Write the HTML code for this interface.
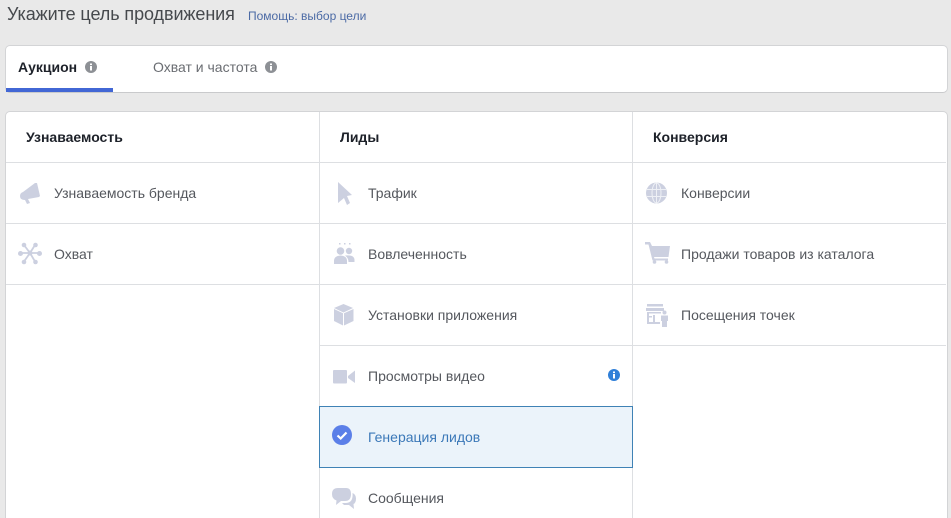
<!DOCTYPE html>
<html lang="ru">
<head>
<meta charset="utf-8">
<style>
html,body{margin:0;padding:0;width:951px;height:518px;overflow:hidden}
body{background:#e9e9e9;font-family:"Liberation Sans",sans-serif;color:#55585e}
#w{position:relative;width:951px;height:518px;overflow:hidden;background:#e9e9e9}
.t{position:absolute;white-space:nowrap;line-height:20px;font-size:14px}
.card{position:absolute;left:5px;width:941px;background:#fff;border:1px solid #d3d4d6;border-radius:5px}
.hl{position:absolute;height:1px;background:#dddfe2}
.vl{position:absolute;width:1px;background:#dddfe2}
.b{font-weight:bold;color:#1d2129}
svg{position:absolute;overflow:visible}
.i{fill:#ccd0e0}
</style>
</head>
<body>
<div id="w">
<div class="t" style="left:7px;top:4px;font-size:18px;color:#46494d;letter-spacing:-.08px">Укажите цель продвижения</div>
<div class="t" style="left:248px;top:6px;font-size:12px;color:#4b6aa5">Помощь: выбор цели</div>

<div class="card" style="top:45px;height:46px;border-bottom-color:#c9cacc"></div>
<div style="position:absolute;left:6px;top:88px;width:107px;height:4px;background:#4267d5"></div>
<div class="t b" style="left:18px;top:57px;font-size:14px">Аукцион</div>
<svg style="left:85px;top:61px" width="12" height="12" viewBox="0 0 12 12"><circle cx="6" cy="6" r="6" fill="#8d9095"/><rect x="5" y="5" width="2" height="4.500" fill="#fff"/><rect x="5" y="2.500" width="2" height="1.600" fill="#fff"/></svg>
<div class="t" style="left:153px;top:57px;color:#6a6d72">Охват и частота</div>
<svg style="left:265px;top:61px" width="12" height="12" viewBox="0 0 12 12"><circle cx="6" cy="6" r="6" fill="#8d9095"/><rect x="5" y="5" width="2" height="4.500" fill="#fff"/><rect x="5" y="2.500" width="2" height="1.600" fill="#fff"/></svg>

<div class="card" style="top:111px;height:430px"></div>
<div class="vl" style="left:319px;top:112px;height:406px"></div>
<div class="vl" style="left:632px;top:112px;height:406px"></div>
<div class="hl" style="left:6px;top:162px;width:940px"></div>
<div class="hl" style="left:6px;top:223px;width:940px"></div>
<div class="hl" style="left:6px;top:284px;width:940px"></div>
<div class="hl" style="left:320px;top:345px;width:626px"></div>
<div style="position:absolute;left:319px;top:406px;width:312px;height:60px;background:#ebf3fa;border:1px solid #3f82b5"></div>

<div class="t b" style="left:26px;top:127px">Узнаваемость</div>
<div class="t b" style="left:340px;top:127px">Лиды</div>
<div class="t b" style="left:653px;top:127px">Конверсия</div>

<div class="t" style="left:54px;top:183px">Узнаваемость бренда</div>
<div class="t" style="left:54px;top:244px">Охват</div>
<div class="t" style="left:368px;top:183px">Трафик</div>
<div class="t" style="left:368px;top:244px">Вовлеченность</div>
<div class="t" style="left:368px;top:305px">Установки приложения</div>
<div class="t" style="left:368px;top:366px">Просмотры видео</div>
<div class="t" style="left:368px;top:427px;color:#3b78b8">Генерация лидов</div>
<div class="t" style="left:368px;top:488px">Сообщения</div>
<div class="t" style="left:681px;top:183px">Конверсии</div>
<div class="t" style="left:681px;top:244px">Продажи товаров из каталога</div>
<div class="t" style="left:681px;top:305px">Посещения точек</div>

<!-- megaphone -->
<svg style="left:0;top:0" width="951" height="518" viewBox="0 0 951 518">
<path class="i" d="M20 196 Q20 193 23 192 L35 183 L37 183 L40 196 L39 197 L28 199 L30 203 L27 204 L25 200 Q20 200 20 196Z"/>
<!-- reach -->
<path d="M30 253 L24 245M30 253 L35 245M30 253 L20.500 253M30 253 L39 253M30 253 L24 261.500M30 253 L35 261.500" stroke="#ccd0e0" stroke-width="1.800" fill="none"/>
<g class="i"><circle cx="30" cy="253" r="2.500"/><circle cx="24" cy="245" r="2.300"/><circle cx="35.500" cy="245" r="2.300"/><circle cx="20.500" cy="253.500" r="2.500"/><circle cx="39.500" cy="253.500" r="2.500"/><circle cx="24" cy="262" r="2.300"/><circle cx="35.500" cy="262" r="2.300"/></g>
<!-- cursor -->
<path class="i" d="M338 182 L352 195 L347 196 L350 203 L347 205 L344 198 L338 203Z"/>
<!-- people -->
<g class="i"><circle cx="340.500" cy="251" r="3.800"/><circle cx="349" cy="251" r="3.200"/><path d="M334 264 V261 Q334 256 340.500 255.500 Q347 256 347 261 V264Z"/><path d="M345 255.500 Q354.500 254.500 354.500 260 V262 H348.500 Q348.500 258 345 255.500Z"/><rect x="339" y="243" width="1.500" height="1.500"/><rect x="344" y="243" width="1.500" height="1.500"/><rect x="349" y="243" width="1.500" height="1.500"/></g>
<!-- box -->
<path class="i" d="M343.500 304 L353 308 L343.500 312.500 L334 308Z"/>
<path class="i" d="M334 309 L343 313.300 L343 325.500 L334 321Z"/>
<path class="i" d="M353.500 309 L344 313.300 L344 325.500 L353.500 321Z"/>
<!-- video -->
<rect class="i" x="333" y="370" width="14" height="13.500" rx="1"/>
<path class="i" d="M348 376 L355 370.500 L355 383 L348 378Z"/>
<!-- check -->
<circle cx="342" cy="435" r="10" fill="#5b7fe8"/>
<path d="M337.500 435.500 L340.700 438.500 L346.500 432.500" fill="none" stroke="#fff" stroke-width="2.200"/>
<!-- messages -->
<path class="i" d="M338 488 H346 Q351 488 351 494 Q351 501 345 501 H341 L336 505 L336.500 500.500 Q332 499 332 494 Q332 488 338 488Z"/>
<path class="i" d="M352.500 493 Q356 494.500 356 498.500 Q356 503 353.500 504 L354 509 L349 505 H344 L342 503 H346 Q353.500 502.500 352.500 493Z"/>
<!-- globe -->
<circle cx="656.500" cy="193" r="10.500" fill="#ccd0e0"/>
<g fill="none" stroke="#eef0f5" stroke-width="1"><ellipse cx="656.500" cy="193" rx="4.500" ry="10"/><path d="M656.500 183V203M647 189.500H666M647 196.500H666"/></g>
<!-- cart -->
<path class="i" d="M645 242 H650 L652 246 H670 L668.500 257 H654 L654.500 258.500 H668 V260.500 H652.500 L648.500 244.500 H645Z"/>
<circle class="i" cx="654.500" cy="262" r="1.800"/><circle class="i" cx="666.500" cy="262" r="1.800"/>
<!-- store visits -->
<g class="i"><rect x="647" y="304" width="16" height="2.500"/><rect x="646" y="308" width="18" height="3"/><rect x="647" y="312" width="14" height="1.500"/><rect x="647" y="312" width="2" height="11"/><rect x="653" y="315" width="2" height="8"/><rect x="649" y="316" width="3" height="1.500"/><rect x="647" y="322" width="13" height="2"/><circle cx="664.500" cy="312.500" r="2"/><path d="M661 315.500 H668 V321 H667 V327 H662 V321 H661Z"/></g>
<!-- info blue -->
<circle cx="614" cy="375" r="6" fill="#2f7fd8"/><rect x="613" y="374" width="2" height="4.500" fill="#fff"/><rect x="613" y="371.500" width="2" height="1.600" fill="#fff"/>
</svg>
</div>
</body>
</html>
